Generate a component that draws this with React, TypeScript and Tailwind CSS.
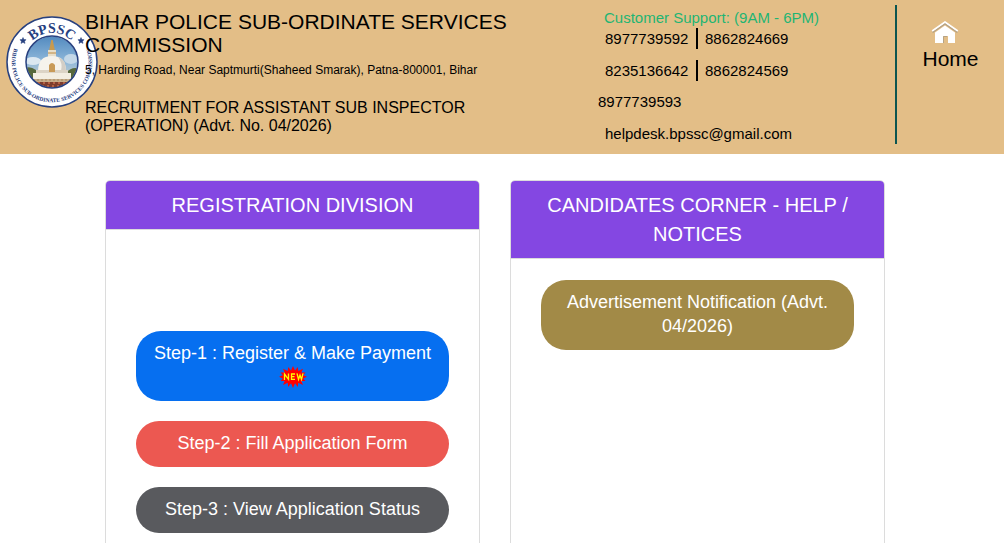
import type { ReactNode } from "react";

function Seal() {
  return (
    <svg viewBox="0 0 92 92" className="h-[92px] w-[92px]" role="img" aria-label="BPSSC seal">
      <defs>
        <path id="seal-top" d="M 17 46 A 29 29 0 0 1 75 46" />
        <path id="seal-bottom" d="M 11.8 25 A 40.2 40.2 0 1 0 80.2 25" />
        <clipPath id="seal-photo">
          <circle cx="46" cy="46" r="25.5" />
        </clipPath>
        <linearGradient id="seal-sky" x1="0" y1="0" x2="0" y2="1">
          <stop offset="0" stopColor="#4d86bd" />
          <stop offset="0.5" stopColor="#8fb8da" />
          <stop offset="0.8" stopColor="#c9cfca" />
        </linearGradient>
      </defs>
      <circle cx="46" cy="46" r="45" fill="#ffffff" stroke="#27407f" strokeWidth="1.5" />
      <g clipPath="url(#seal-photo)">
        <rect x="18" y="18" width="56" height="56" fill="url(#seal-sky)" />
        <ellipse cx="27" cy="45" rx="8" ry="4" fill="#dce8f1" />
        <ellipse cx="65" cy="43" rx="7" ry="5" fill="#c4d8e8" />
        <path d="M18 53 Q23 49 30 54 L33 66 H18 Z M60 57 Q66 50 74 53 V66 H60 Z" fill="#56683c" />
        <path d="M45.3 24 H46.7 L49 35 H43 Z" fill="#c99a4d" />
        <rect x="42" y="34" width="8" height="7" fill="#e9dfc9" />
        <path d="M42 37 H50" stroke="#bd8b45" strokeWidth="1" />
        <path d="M32 55 Q32 40 46 40 Q60 40 60 55 Z" fill="#f6f3ec" />
        <path d="M52 41 Q60 43 60 55 H55 Q57 47 52 41 Z" fill="#d3cec6" />
        <rect x="30" y="54" width="32" height="3" fill="#dcd4c6" />
        <rect x="27" y="57" width="38" height="6" fill="#f3eee2" />
        <rect x="23" y="63" width="46" height="3" fill="#c7ad89" />
        <path d="M43 56 V49 Q46 45 49 49 V56 Z" fill="#c99b58" />
        <path d="M27 64 H66" stroke="#a28863" strokeWidth="1" strokeDasharray="2 2" />
        <rect x="20" y="66" width="52" height="8" fill="#7d3d2d" />
        <path d="M27 67 H66 M31 70 H60" stroke="#c66d49" strokeWidth="1.5" strokeDasharray="2 3" />
      </g>
      <circle cx="46" cy="46" r="26" fill="none" stroke="#27407f" strokeWidth="1.5" />
      <text fill="#27407f" fontSize="14" fontWeight="bold" fontFamily="Liberation Serif, serif" textAnchor="middle">
        <textPath href="#seal-top" startOffset="50%">BPSSC</textPath>
      </text>
      <text fill="#27407f" fontSize="5.6" fontWeight="bold" fontFamily="Liberation Serif, serif" textAnchor="middle">
        <textPath href="#seal-bottom" startOffset="50%">BIHAR POLICE SUB-ORDINATE SERVICES COMMISSION</textPath>
      </text>
      <path d="M17 21.5 l.9 2 2.2.2 -1.6 1.5 .5 2.2 -2-1.1 -2 1.1 .5-2.2 -1.6-1.5 2.2-.2z" fill="#27407f" stroke="#27407f" strokeWidth="0.5" />
      <path d="M75 21.5 l.9 2 2.2.2 -1.6 1.5 .5 2.2 -2-1.1 -2 1.1 .5-2.2 -1.6-1.5 2.2-.2z" fill="#27407f" stroke="#27407f" strokeWidth="0.5" />
    </svg>
  );
}

function HouseIcon() {
  return (
    <svg viewBox="0 0 28 23" className="h-[23px] w-[28px]" aria-hidden="true">
      <path d="M1.5 11.3 L14 2.6 L26.5 11.3" fill="none" stroke="#b5a386" strokeWidth="1.6" />
      <path d="M4 11.5 L14 4.4 L24 11.5 V22 H17 V15 H12 V22 H4 Z" fill="#ffffff" />
      <path d="M1.2 10 L14 1 L26.8 10" fill="none" stroke="#ffffff" strokeWidth="1.7" />
      <path d="M2 11.2 L14 2.8 L26 11.2" fill="none" stroke="#b5a386" strokeWidth="0.6" />
      <path d="M12.5 22 V15.5 H16" fill="none" stroke="#b5a386" strokeWidth="1" />
    </svg>
  );
}

function NewBadge() {
  return (
    <svg viewBox="0 0 28 22" className="h-[22px] w-[28px]" role="img" aria-label="New">
      <path
        d="M14 0 L16 4.5 L18.8 1 L19.3 5 L24 2.8 L22.3 6.6 L26.5 6.5 L24.2 9.2 L28 10.8 L24.2 12.6 L26.5 15 L22.3 15 L24 19 L19.3 16.8 L18.8 21 L16 17.3 L14 22 L12 17.3 L9.2 21 L8.7 16.8 L4 19 L5.7 15 L1.5 15 L3.8 12.6 L0 10.8 L3.8 9.2 L1.5 6.5 L5.7 6.6 L4 2.8 L8.7 5 L9.2 1 L12 4.5 Z"
        fill="#ff0000"
      />
      <g fill="none" stroke="#ffff00" strokeWidth="1.3">
        <path d="M5.5 14 V8 L9.5 13.4 V7.4" />
        <path d="M16 8 H12.5 V13.4 H16 M12.5 10.7 H15.5" />
        <path d="M18 7.4 L19.5 13.4 L21 9 L22.5 13.4 L24 7.4" />
      </g>
    </svg>
  );
}

function PhonePair({ first, second }: { first: string; second: string }) {
  return (
    <div className="flex h-8 items-start pl-[7px]">
      <a href={"tel:" + first} className="w-[93px] border-r-2 border-black leading-[21px]">
        {first}
      </a>
      <a href={"tel:" + second} className="pl-[7px] leading-[21px]">
        {second}
      </a>
    </div>
  );
}

function Card({ title, children }: { title: string; children: ReactNode }) {
  return (
    <section className="flex flex-col rounded-[5px] border border-[#dcdcdc] bg-white pb-10">
      <h2 className="rounded-t-[4px] border-b border-[#dcdcdc] bg-[#8447e2] px-4 pt-[10px] pb-[9px] text-center text-[20px] leading-[29px] text-white">
        {title}
      </h2>
      {children}
    </section>
  );
}

function Pill({ color, children }: { color: string; children: ReactNode }) {
  return (
    <button
      type="button"
      className={"w-full cursor-pointer rounded-[25px] px-4 pt-[10px] pb-3 text-center text-[18px] leading-6 text-white " + color}
    >
      {children}
    </button>
  );
}

export default function App() {
  return (
    <div className="min-h-screen bg-white font-['Liberation_Sans',Arial,sans-serif] text-black">
      <header className="flex min-h-[154px] bg-[#e3be87]">
        <div className="-mr-[13px] shrink-0 pt-4 pl-[6px]">
          <Seal />
        </div>
        <div className="relative min-w-0 flex-1 pt-[10px] pr-16">
          <h1 className="text-[21px] leading-[23px]">BIHAR POLICE SUB-ORDINATE SERVICES COMMISSION</h1>
          <p className="mt-[5px] text-[12px] leading-[18px]">
            5, Harding Road, Near Saptmurti(Shaheed Smarak), Patna-800001, Bihar
          </p>
          <p className="mt-5 text-[16px] leading-[18px]">
            RECRUITMENT FOR ASSISTANT SUB INSPECTOR (OPERATION) (Advt. No. 04/2026)
          </p>
        </div>
        <address className="w-[297px] shrink-0 pt-2 text-[15px] not-italic">
          <p className="pl-[6px] leading-5 text-[#1fb573]">Customer Support: (9AM - 6PM)</p>
          <PhonePair first="8977739592" second="8862824669" />
          <PhonePair first="8235136642" second="8862824569" />
          <p className="h-8 leading-5">
            <a href="tel:8977739593">8977739593</a>
          </p>
          <p className="pl-[7px] leading-5">
            <a href="mailto:helpdesk.bpssc@gmail.com">helpdesk.bpssc@gmail.com</a>
          </p>
        </address>
        <nav className="mt-[5px] mb-[10px] w-[109px] shrink-0 border-l-2 border-[#0b5550] pt-4">
          <a href="#home" className="flex flex-col items-center text-[21px] leading-[30px]">
            <span className="pr-3">
              <HouseIcon />
            </span>
            Home
          </a>
        </nav>
      </header>

      <main className="mt-[26px] mr-[119px] ml-[105px] grid grid-cols-2 gap-[30px]">
        <Card title="REGISTRATION DIVISION">
          <div className="flex flex-col gap-5 px-[30px] pt-[101px]">
            <Pill color="bg-[#066ff0]">
              Step-1 : Register &amp; Make Payment
              <span className="flex h-6 items-center justify-center">
                <NewBadge />
              </span>
            </Pill>
            <Pill color="bg-[#ec5851]">Step-2 : Fill Application Form</Pill>
            <Pill color="bg-[#595a5e]">Step-3 : View Application Status</Pill>
          </div>
        </Card>
        <Card title="CANDIDATES CORNER - HELP / NOTICES">
          <div className="flex flex-col gap-5 px-[30px] pt-[21px]">
            <Pill color="bg-[#a28a47]">Advertisement Notification (Advt. 04/2026)</Pill>
          </div>
        </Card>
      </main>
    </div>
  );
}
